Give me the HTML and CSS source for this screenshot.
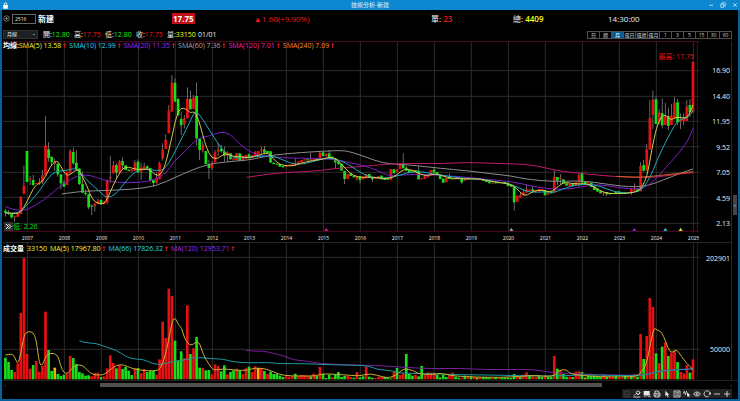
FILE: index.html
```html
<!DOCTYPE html>
<html lang="zh-Hant">
<head>
    <meta charset="UTF-8">
    <meta name="viewport" content="width=device-width, initial-scale=1">
    <title>技術分析-新建</title>
    <link rel="stylesheet" href="styles.css">
</head>
<body>
    <div class="window">
        <header class="titlebar">
            <svg class="lock" viewBox="0 0 10 14"><path d="M2.5 7V4a2.5 2.5 0 0 1 5 0v3" fill="none" stroke="#fff" stroke-width="1.6"/><rect x="0.5" y="6" width="9" height="7.5" fill="#fff"/></svg>
            <h1>技術分析-新建</h1>
            <div class="window-buttons">
                <button aria-label="最小化"><svg viewBox="0 0 12 12"><path d="M2 6.5h8"/></svg></button>
                <button aria-label="還原"><svg viewBox="0 0 12 12"><path d="M1.5 4.5h6v6h-6zM4 4V1.5h6.5V8H8"/></svg></button>
                <button aria-label="關閉"><svg viewBox="0 0 12 12"><path d="M2.5 2.5l7 7M9.500 2.500l-7 7"/></svg></button>
            </div>
        </header>

        <section class="quote">
            <div class="stock">
                <svg viewBox="0 0 14 14"><circle cx="7" cy="7" r="5.500"/><path d="M7 4v6M4 7h6"/></svg>
                <input type="text" value="2516" aria-label="股票代號">
                <strong>新建</strong>
            </div>
            <div><b class="last">17.75</b></div>
            <div class="up"><svg class="rise" viewBox="0 0 10 10"><path d="M5 1l5 9H0z"/></svg>1.60(+9.90%)</div>
            <div>單: <span class="up">23</span></div>
            <div>總: <span class="amount">4409</span></div>
            <div>14:30:00</div>
        </section>

        <section class="toolbar">
            <select aria-label="週期">
                <option>月線</option>
            </select>
            <div class="ohlc">
                <span>開:<b class="down">12.80</b></span>
                <span>高:<b class="up">17.75</b></span>
                <span>低:<b class="down">12.80</b></span>
                <span>收:<b class="up">17.75</b></span>
                <span>量:<b class="amount">33150</b></span>
                <span>01/01</span>
            </div>
            <div class="periods">
                <button>日</button>
                <button>週</button>
                <button class="active">月</button>
                <button>還日</button>
                <button>還週</button>
                <button>還月</button>
                <button>1</button>
                <button>3</button>
                <button>5</button>
                <button>15</button>
                <button>30</button>
                <button>60</button>
            </div>
        </section>

        <main class="charts">
            <section class="panel price">
                <svg class="plot" id="price" viewBox="9 -27 2091 573" preserveAspectRatio="none"></svg>
                <div class="axis">
                    <span>16.90</span>
                    <span>14.40</span>
                    <span>11.95</span>
                    <span>9.52</span>
                    <span>7.05</span>
                    <span>4.59</span>
                    <span>2.13</span>
                </div>
                <div class="legend">
                    <strong>均線:</strong>
                    <span class="ma5">SMA(5) 13.58<i></i></span>
                    <span class="ma10">SMA(10) 12.99<i></i></span>
                    <span class="ma20">SMA(20) 11.35<i></i></span>
                    <span class="ma60">SMA(60) 7.36<i></i></span>
                    <span class="ma120">SMA(120) 7.01<i></i></span>
                    <span class="ma240">SMA(240) 7.09<i></i></span>
                </div>
                <span class="highest">最高: 17.75</span>
                <span class="lowest"><button aria-label="展開"><svg viewBox="0 0 14 14"><path d="M2 2l5 5-5 5M7 2l5 5-5 5"/></svg></button>低: 2.26</span>
            </section>

            <div class="years" id="years"></div>

            <section class="panel volume">
                <svg class="plot" id="volume" viewBox="9 9 2091 411" preserveAspectRatio="none"></svg>
                <div class="axis">
                    <span>202901</span>
                    <span>50000</span>
                </div>
                <div class="legend">
                    <strong>成交量</strong>
                    <span class="ma5">33150</span>
                    <span class="ma5">MA(5) 17967.80<i></i></span>
                    <span class="ma10">MA(66) 17826.32<i></i></span>
                    <span class="ma20">MA(120) 12953.71<i></i></span>
                </div>
            </section>
            <button class="side-tab" aria-label="側欄">‹</button>
        </main>

        <div class="scroll">
            <span>‹</span>
            <div class="track"><div class="thumb"></div></div>
            <span>›</span>
        </div>

        <nav class="tools">
            <button class="dim" aria-label="另存"><svg viewBox="0 0 24 24"><path d="M6 4h9l4 4v13H6zM9 13h7"/></svg></button>
            <button aria-label="畫線"><svg viewBox="0 0 24 24"><path d="M1 21h21M3 17l7-7 5 5 7-9"/><circle cx="15" cy="8" r="5"/></svg></button>
            <button aria-label="查價"><svg viewBox="0 0 24 24"><path class="solid" d="M2 3h18v12H2z"/><path d="M2 18h10"/><circle cx="17" cy="16" r="3"/><path d="M19 18l4 4"/></svg></button>
            <button aria-label="列印"><svg viewBox="0 0 24 24"><path d="M6 10V3h9l3 3v4M6 18H3v-8h18v8h-3M6 15h12v6H6z"/></svg></button>
            <button aria-label="指標"><svg viewBox="0 0 24 24"><path class="solid" d="M7 2v17l4-4 3 7 3-1-3-7h5z"/></svg></button>
            <button aria-label="報價"><svg viewBox="0 0 24 24"><path d="M3 3h18v18H3zM7 8h4M7 12h4M7 16h4M15 7v10M13 7h4M13 17h4"/></svg></button>
            <button aria-label="走勢"><svg viewBox="0 0 24 24"><path d="M1 10l3-6 3 10 4-11"/><path class="solid" d="M12 7v13l3-3 3 5 2-1-2-5h4z"/></svg></button>
            <button aria-label="顯示"><svg viewBox="0 0 24 24"><path d="M2 12c4-8 16-8 20 0-4 8-16 8-20 0z"/><circle cx="12" cy="12" r="3"/></svg></button>
            <button aria-label="重新整理"><svg viewBox="0 0 24 24"><path d="M17 19a9 9 0 1 1 4-6M17 13h5l0-6"/></svg></button>
            <button aria-label="縮小"><svg viewBox="0 0 24 24"><path d="M3 12h18"/></svg></button>
            <button aria-label="放大"><svg viewBox="0 0 24 24"><path d="M3 12h18M12 3v18"/></svg></button>
        </nav>
    </div>
    <script src="chart.js"></script>
</body>
</html>
```
FILE: styles.css
```css
* {
    box-sizing: border-box;
}

body {
    margin: 0;
    background: #000;
    color: #eee;
    font-family: "Open Sans", "Noto Sans CJK TC", sans-serif;
    font-size: 7px;
    line-height: 9px;
}

button,
input,
select {
    margin: 0;
    padding: 0;
    border: 0;
    border-radius: 0;
    background: none;
    color: inherit;
    font: inherit;
}

svg {
    display: block;
}

.window {
    display: flex;
    flex-direction: column;
    height: 100vh;
    border: solid #07609c;
    border-width: 0 2px 2px;
}

/* title bar */
.titlebar {
    display: grid;
    grid-template-columns: 36px 1fr 36px;
    align-items: center;
    flex: none;
    height: 10px;
    margin: 0 -2px;
    padding: 0 2px;
    background: #0c88d0;
}

.titlebar h1 {
    margin: 0;
    color: #e4f4ff;
    font-size: 6px;
    font-weight: normal;
    line-height: 10px;
    text-align: center;
}

.lock {
    width: 5px;
    height: 7px;
    margin-left: 1px;
}

.window-buttons {
    display: flex;
    justify-content: flex-end;
    gap: 6px;
}

.window-buttons svg {
    width: 6px;
    height: 6px;
    fill: none;
    stroke: #d5ecfa;
    stroke-width: 1.5;
}

/* quote line */
.quote {
    display: grid;
    grid-template-columns: 170fr 83fr 176fr 82fr 95fr 130fr;
    align-items: center;
    flex: none;
    height: 17px;
    font-size: 8px;
}

.stock {
    display: flex;
    align-items: center;
    gap: 2px;
    padding-left: 1px;
}

.stock svg {
    width: 7px;
    height: 7px;
    fill: none;
    stroke: #aaa;
    stroke-width: 1.3;
}

.stock input {
    width: 24px;
    height: 10px;
    padding: 0 2px;
    border: 1px solid #666;
    font-size: 5px;
}

.stock strong {
    color: #fff;
    font-size: 8px;
}

.last {
    display: inline-block;
    padding: 0 1px;
    background: #c01018;
    color: #fff;
    line-height: 11px;
}

.quote span {
    font-weight: 600;
}

.rise {
    display: inline-block;
    width: 6px;
    height: 5px;
    margin-right: 1px;
    fill: #f01818;
}

.up {
    color: #f01818;
}

.down {
    color: #10f010;
}

.amount {
    color: #ffff20;
}

/* toolbar */
.toolbar {
    display: flex;
    align-items: center;
    flex: none;
    height: 14px;
    padding: 1px 6px 0 1px;
}

.toolbar select {
    appearance: none;
    width: 35px;
    height: 9px;
    padding-left: 3px;
    border: 1px solid #333;
    background: #1d2022 linear-gradient(#888, #888) no-repeat 29px 3px / 2px 1px;
    font-size: 5px;
    line-height: 7px;
}

.ohlc {
    display: grid;
    grid-template-columns: repeat(6, 31px);
    margin-left: 5px;
    white-space: nowrap;
}

.ohlc b {
    font-weight: normal;
}

.periods {
    display: grid;
    grid-template-columns: repeat(12, 12px);
    margin-left: auto;
    border: solid #505050;
    border-width: 1px 1px 1px 0;
}

.periods button {
    height: 6px;
    border-left: 1px solid #505050;
    color: #ccc;
    font-size: 5px;
    line-height: 6px;
    white-space: nowrap;
}

.periods .active {
    background: #0b5c94;
    color: #fff;
}

/* charts */
.charts {
    position: relative;
    display: flex;
    flex-direction: column;
    flex: 1;
    min-height: 0;
    padding: 0 6px 0 1px;
}

.panel {
    position: relative;
    display: grid;
    grid-template-columns: 1fr 31px;
    min-height: 0;
    border-right: 1px solid #292929;
}

.price {
    flex: 191;
}

.volume {
    flex: 137;
}

.plot {
    width: 100%;
    height: 100%;
    min-height: 0;
}

.plot path {
    fill: none;
    vector-effect: non-scaling-stroke;
}

.axis {
    display: flex;
    flex-direction: column;
    justify-content: space-between;
    padding-right: 1px;
    text-align: right;
}

.price .axis {
    padding-top: 25px;
    padding-bottom: 4px;
}

.volume .axis {
    padding-top: 11px;
    padding-bottom: 26px;
}

.legend {
    position: absolute;
    top: 0;
    left: 0;
    display: flex;
    gap: 3px;
    white-space: nowrap;
}

.legend strong {
    color: #fff;
}

.price .legend strong {
    margin-right: -3px;
}

.volume .legend {
    top: 1px;
}

/* rising arrow behind each average */
.legend i {
    display: inline-block;
    width: 3px;
    height: 5px;
    margin-left: 2px;
    background: #e01818;
    clip-path: polygon(50% 0, 100% 40%, 66% 40%, 66% 100%, 33% 100%, 33% 40%, 0 40%);
}

.ma5 { color: #f4f42c; }
.ma10 { color: #28d8f0; }
.ma20 { color: #a428e8; }
.ma60 { color: #a4a4a4; }
.ma120 { color: #f020a4; }
.ma240 { color: #fc8c1c; }

.highest {
    position: absolute;
    top: 11px;
    right: 37px;
    color: #f01010;
}

.lowest {
    position: absolute;
    bottom: 1px;
    left: 1px;
    display: flex;
    color: #10e010;
}

.lowest button {
    width: 9px;
    height: 9px;
    background: #333;
}

.lowest svg {
    width: 7px;
    height: 7px;
    margin: 1px;
    fill: none;
    stroke: #fff;
    stroke-width: 2;
}

.years {
    display: flex;
    flex: none;
    height: 11px;
    padding: 1px 19px 0 6px;
    border: solid #292929;
    border-width: 0 1px 1px 0;
    font-size: 5px;
    line-height: 10px;
    text-align: center;
}

.years span {
    flex: 1;
}

.side-tab {
    position: absolute;
    top: 154px;
    right: 1px;
    width: 4px;
    height: 20px;
    background: #444;
    font-size: 6px;
}

/* bottom */
.scroll {
    display: flex;
    align-items: center;
    flex: none;
    height: 9px;
    padding: 0 6px 0 2px;
    border-top: 1px solid #202020;
    color: #777;
    font-size: 6px;
}

.track {
    flex: 1;
    padding: 0 128px 0 94px;
}

.thumb {
    height: 4px;
    background: #505050;
}

.tools {
    display: flex;
    justify-content: flex-end;
    flex: none;
    height: 10px;
    padding-right: 6px;
}

.tools button {
    width: 10px;
    height: 9px;
    background: #202224;
}

.tools svg {
    width: 8px;
    height: 8px;
    margin: 0 auto;
    fill: none;
    stroke: #e8e8e8;
    stroke-width: 2.5;
}

.tools .solid {
    fill: #e8e8e8;
    stroke: none;
}

.tools .dim svg {
    stroke: #444;
}
```
FILE: chart.js
```js
// plot units: 111 per year, y grows downwards
var STEP = 9.25;
var START = 81 - 7 * STEP;

// colour, then [high] top bottom [low]
var candles = `g 477 482 488 500,g 480 487 491 495,g 490 492 502 506,r 497 499 501 515,r 490 501,r 440 492,r 347 407 432 432,
g 303 396,r 378 386 390 405,g 374 390 405 408,r 399 402,r 384 397 401 405,r 360 376 397 402,r 197 286 376 376,g 276 298 324 335,g 318 321 337 345,r 325 334 342 362,g 341 341 373 380,g 373 373 400 418,
g 390 398 410 410,r 365 405,r 298 302 370 370,g 293 306 340 345,g 300 338 357 362,g 354 356 402 405,g 365 402 428 430,g 418 428 432 437,g 432 432 472 478,g 462 467 470 495,r 459 461 469 485,r 446 452 462 462,
g 448 450 462 465,r 455 462,r 388 390 458 462,r 318 381 385 398,r 333 346 370 370,g 340 345 368 385,r 330 335 368 368,g 322 333 346 358,g 346 360,g 359 363,r 358 364,r 330 337 362 362,
g 328 335 368 368,r 338 353 365 390,r 338 349 358 358,g 345 349 356 360,g 354 354 390 395,g 390 390 399 410,r 367 385 400 400,r 335 340 388 388,r 280 299 326 332,r 253 270 297 297,r 165 181 250 250,r 75 98 185 185,
g 85 98 155 155,g 143 147 195 200,g 185 207 226 255,r 195 205 223 235,r 112 147 205 205,g 122 147 178 178,r 135 143 177 177,g 97 138 265 285,g 265 265 300 330,r 275 284 303 308,g 303 342,g 330 342 354 387,
r 333 340 354 360,r 300 307 337 337,r 280 298 305 318,g 285 296 304 308,g 290 304 317 335,r 304 307 317 335,g 310 328,r 325 331,r 310 330,g 310 332,r 318 333,r 315 327,
g 310 313 325 325,r 316 324,r 302 306 318 318,r 303 312,r 290 299 303 310,g 288 298 308 313,g 303 309,g 304 338,g 338 342,g 341 343,g 342 350,g 348 352,
r 345 350,r 344 348,r 343 348,r 325 340 345 348,r 334 341,r 330 337,r 328 331,g 328 331,r 308 328 332 332,r 328 330,g 325 332,r 303 308 325 325,
g 307 318,r 311 319,g 300 310 325 325,g 320 328,g 325 325 337 357,g 335 343,g 341 362,g 363 363 387 402,r 372 387,g 370 378,g 377 382,r 378 378 386 392,
g 378 378 390 400,r 380 388,r 373 385,g 372 384,g 382 382 388 396,r 383 387,r 378 386,g 377 388,g 386 390,g 386 389,r 357 390,g 358 370,
r 358 366,r 342 357,g 310 342 355 355,g 347 353 362 362,g 360 367,r 359 366,g 360 366,g 348 362 388 388,r 385 388,r 372 379 387 387,r 377 382,r 360 376,
g 355 359 368 368,g 366 375,g 374 387,g 386 398,r 384 397,g 370 381 387 387,g 385 388,r 385 388,g 384 387,g 385 385 397 403,r 385 392,g 385 389,
r 385 387,g 385 387,r 385 387,g 386 390,g 388 393,g 391 396,g 394 400,r 398 401,g 397 400,r 396 400,r 396 399,g 396 400,
g 398 408,g 403 410,g 410 410 457 482,r 437 455,r 428 435 443 443,r 420 427 436 436,r 403 418 428 428,r 419 423,g 408 418 424 424,r 420 424,r 417 424,r 417 422,
g 420 436,r 428 434,g 426 430,r 360 380 428 428,g 381 381 392 405,r 372 383 387 402,g 388 400,g 400 407,r 402 408,g 400 408,r 397 407,r 370 375 397 410,
g 368 398,g 395 401,r 396 400,g 398 411,g 409 420,g 416 425,g 423 430,r 427 427 430 437,g 426 426 433 438,g 429 433,r 429 432,g 426 432,
g 424 430,r 428 431,g 427 432,r 429 431,r 417 417 429 435,r 400 416 422 422,g 418 424,r 337 348 424 424,g 330 345 362 365,r 282 298 362 362,r 150 204 298 300,r 122 149 195 237,
g 140 148 222 222,r 178 188 215 225,g 145 189 226 235,r 158 200 225 225,g 173 198 228 240,r 162 197 225 225,r 140 158 205 205,g 147 157 217 225,r 190 208 215 237,r 190 207 213 225,r 150 169 213 213,g 147 165 186 200,r 34 36 187 187`;

// top of each bar and its colour
var volumes = `353g 366g 390g 396r 370r 219r 54r 342r 386r 375g 363r 395r 378r 215r 330g 393g 383y 402g 408g
404g 401r 348r 354g 372g 396g 400g 407g 406g 409r 399r 398r 411g 409r 385r 346r 369r 385g 376r 387g 381g 392g 405g 384r
384g 400r 387r 396g 393g 393g 404r 358r 245r 294r 146r 168r 302g 361g 334g 354r 196r 342g 325r 291g 383g 384r 391g 390g
403r 373r 378r 394g 376g 403r 396g 391g 386r 392g 402r 385r 380g 396r 379r 384y 384r 393g 402r 395g 402g 402g 407g 411g
409r 410r 408r 401g 407r 405r 406r 407r 409g 401r 408g 381r 402g 414g 404g 411r 404g 396g 411g 408g 408r 411r 413g 396r
412g 409g 380r 410g 413g 414r 410r 411r 411g 413g 415g 396r 384g 405r 400r 342g 402g 407g 404r 409g 378g 405r 397r 398r
398r 404g 412g 405g 411g 404r 398r 410g 413g 414r 407g 409r 409g 411r 413y 411r 411g 412g 413g 413r 412g 413r 413g 412g
413g 414g 402g 410r 411g 404r 397r 405g 407r 411r 405g 411g 406r 411g 410g 348r 386g 391r 402g 410g 410r 411g 395r 394r
396g 413y 407g 407g 407g 409g 411g 404r 411g 410r 411r 409g 412r 413r 408g 411r 410g 403r 410g 282r 357g 288r 174r 201r
340g 369r 320g 307r 348g 338r 331r 366g 396r 400r 375r 398g 358r`;

var priceLines = {
    '#8c8c8c': '185,432 240,424 300,422 400,418 470,408 530,380 600,350 650,338 750,330 800,318 850,312 900,308 960,304 1030,301 1060,308 1100,322 1150,340 1200,343 1250,347 1320,355 1400,362 1470,371 1530,377 1580,388 1660,395 1740,392 1790,398 1860,408 1910,411 1950,405 1990,390 2040,370 2079,357',
    '#c01a68': '740,382 800,373 850,368 950,363 1010,355 1080,350 1160,342 1250,340 1330,341 1400,337 1470,340 1560,342 1610,347 1660,360 1720,368 1800,376 1880,382 1960,383 2020,374 2079,368',
    '#d0641c': '1850,379 1920,383 1980,376 2040,370 2079,365',
    '#7a1fc0': '16,470 60,488 110,465 150,435 190,400 235,375 270,375 310,390 350,398 420,398 460,390 500,370 520,335 560,300 590,265 630,258 660,245 690,250 720,285 750,305 780,318 850,323 900,325 960,325 1010,330 1060,340 1110,352 1150,370 1170,378 1250,372 1300,375 1380,380 1460,388 1540,395 1600,410 1680,420 1740,412 1790,402 1850,412 1900,417 1930,415 1960,395 2000,350 2040,305 2065,270 2079,235',
    '#1fa8b8': '16,490 60,490 75,470 105,440 130,405 155,370 180,362 200,362 225,353 245,372 270,400 295,420 315,442 335,440 355,425 380,390 410,360 440,356 470,363 495,358 520,315 545,265 570,215 585,182 600,195 625,235 650,275 680,315 710,325 740,322 785,318 820,318 850,330 885,345 930,338 970,325 1005,325 1040,340 1070,360 1100,378 1130,384 1180,383 1220,368 1260,364 1300,372 1340,378 1390,385 1450,388 1530,402 1560,415 1590,428 1630,425 1665,428 1700,412 1730,405 1765,402 1800,408 1840,425 1880,430 1920,425 1940,400 1960,360 1980,310 2010,250 2035,208 2065,205 2079,180',
    '#d8c850': '16,488 44,492 62,488 81,455 105,405 130,395 150,350 165,335 173,333 183,350 195,372 205,377 218,368 235,355 247,380 262,410 275,445 290,460 312,463 325,440 340,405 355,375 368,355 385,350 405,358 430,358 450,358 465,375 480,377 495,350 515,265 530,195 543,172 560,178 572,190 582,183 595,205 608,255 620,295 635,325 655,326 675,308 700,320 725,320 748,324 778,315 798,308 812,315 830,338 850,347 880,348 900,340 940,331 968,328 990,320 1012,328 1035,355 1060,378 1090,383 1110,380 1140,385 1170,386 1190,375 1210,358 1230,358 1260,372 1280,378 1300,372 1320,374 1340,383 1380,387 1440,386 1470,394 1500,398 1530,402 1550,415 1568,435 1582,436 1600,423 1625,420 1650,427 1665,418 1690,396 1710,400 1740,402 1760,400 1785,412 1810,428 1850,432 1900,428 1920,420 1935,395 1945,360 1955,300 1970,230 1985,197 1998,195 2012,212 2030,200 2050,205 2065,200 2079,165'
};

var volumeLines = {
    '#7a1fa0': '738,331 760,334 790,333 820,340 850,347 880,360 920,363 960,371 1040,374 1110,376 1170,379 1230,383 1290,386 1380,385 1460,389 1590,388 1620,392 1650,397 1700,400 1790,404 1860,405 1910,406 1950,400 1980,394 2030,388 2079,386',
    '#1f98a0': '238,302 250,308 290,310 310,319 350,330 380,352 410,358 430,358 460,372 480,373 500,370 520,364 545,362 580,353 610,353 630,356 670,357 695,365 750,369 800,367 840,371 920,371 980,374 1080,376 1110,379 1130,388 1180,393 1200,400 1300,401 1360,404 1470,405 1560,407 1620,408 1700,407 1760,404 1850,407 1920,406 1950,402 1970,394 2020,390 2079,387',
    '#c8b030': '16,345 35,341 44,350 53,374 62,345 72,285 82,275 99,275 109,300 118,372 127,378 140,340 172,340 182,378 192,400 205,400 215,385 229,375 247,375 262,390 275,403 300,406 315,402 330,390 350,375 370,374 395,385 420,391 470,393 482,385 495,350 506,300 517,242 526,232 535,255 545,263 553,295 570,318 583,310 597,303 610,345 625,370 640,392 670,386 700,390 740,392 765,383 800,387 820,396 850,407 900,408 950,408 965,401 1010,403 1050,406 1080,408 1110,400 1150,411 1165,413 1180,409 1195,400 1211,385 1240,391 1255,402 1300,404 1320,399 1350,406 1390,410 1500,413 1580,408 1600,406 1660,411 1675,391 1700,388 1710,402 1750,407 1800,410 1860,411 1915,409 1923,395 1940,375 1960,262 1970,270 1985,275 1997,305 2010,338 2022,335 2030,328 2045,350 2060,370 2079,388'
};

var colors = { r: '#e81010', g: '#18e018', y: '#f0b000' };

function line(d, color) {
    return '<path d="' + d + '" stroke="' + color + '"/>';
}

function rect(x, y, w, h, color) {
    return '<rect x="' + x + '" y="' + y + '" width="' + w + '" height="' + h + '" fill="' + color + '"/>';
}

// runs through the midpoints so that the averages look round
function curve(points) {
    var p = points.split(' ').map(function (s) { return s.split(',').map(Number); });
    var d = 'M' + p[0];
    for (var i = 1; i < p.length - 1; i++) {
        d += 'Q' + p[i] + ' ' + (p[i][0] + p[i + 1][0]) / 2 + ',' + (p[i][1] + p[i + 1][1]) / 2;
    }
    return d + 'L' + p[p.length - 1];
}

function grid(rows, top, bottom) {
    var out = '';
    rows.forEach(function (y) { out += line('M9 ' + y + 'H2100', '#2c2c2c'); });
    for (var i = 0; i < 19; i++) {
        out += line('M' + (82 + i * 111) + ' ' + top + 'V' + bottom, '#2c2c2c');
    }
    return out;
}

function averages(lines) {
    return Object.keys(lines).map(function (color) {
        return line(curve(lines[color]), color);
    }).join('');
}

function drawPrice() {
    var out = grid([62, 139, 214, 290, 367, 442, 520], -27, 546);
    out += line('M9 -25H2100M9 544H2100M2092 -27V546', '#4c0c20');
    candles.split(',').forEach(function (row, i) {
        var v = row.trim().split(' ');
        var n = v.slice(1).map(Number);
        if (n.length === 2) n = [n[0], n[0], n[1], n[1]];
        var x = START + i * STEP;
        out += rect(x - 1, n[0], 2, n[3] - n[0], '#999');
        out += rect(x - 4, n[1], 8, Math.max(n[2] - n[1], 3), colors[v[0]]);
    });
    out += averages(priceLines);
    [[979, '#d01c8c'], [1534, '#999'], [1903, '#9020d0'], [1996, '#22bfd0'], [2042, '#dede28']].forEach(function (m) {
        out += '<polygon points="' + (m[0] - 6) + ',543 ' + m[0] + ',533 ' + (m[0] + 6) + ',543" fill="' + m[1] + '"/>';
    });
    document.getElementById('price').innerHTML = out;
}

function drawVolume() {
    var out = grid([52, 328], 9, 420) + line('M2092 9V420', '#202020');
    volumes.split(/\s+/).forEach(function (v, i) {
        var y = parseInt(v, 10);
        out += rect(START + i * STEP - 4, y, 8, 418 - y, colors[v.slice(-1)]);
    });
    document.getElementById('volume').innerHTML = out + averages(volumeLines);
}

drawPrice();
drawVolume();
for (var year = 2007; year <= 2025; year++) {
    document.getElementById('years').innerHTML += '<span>' + year + '</span>';
}
```
